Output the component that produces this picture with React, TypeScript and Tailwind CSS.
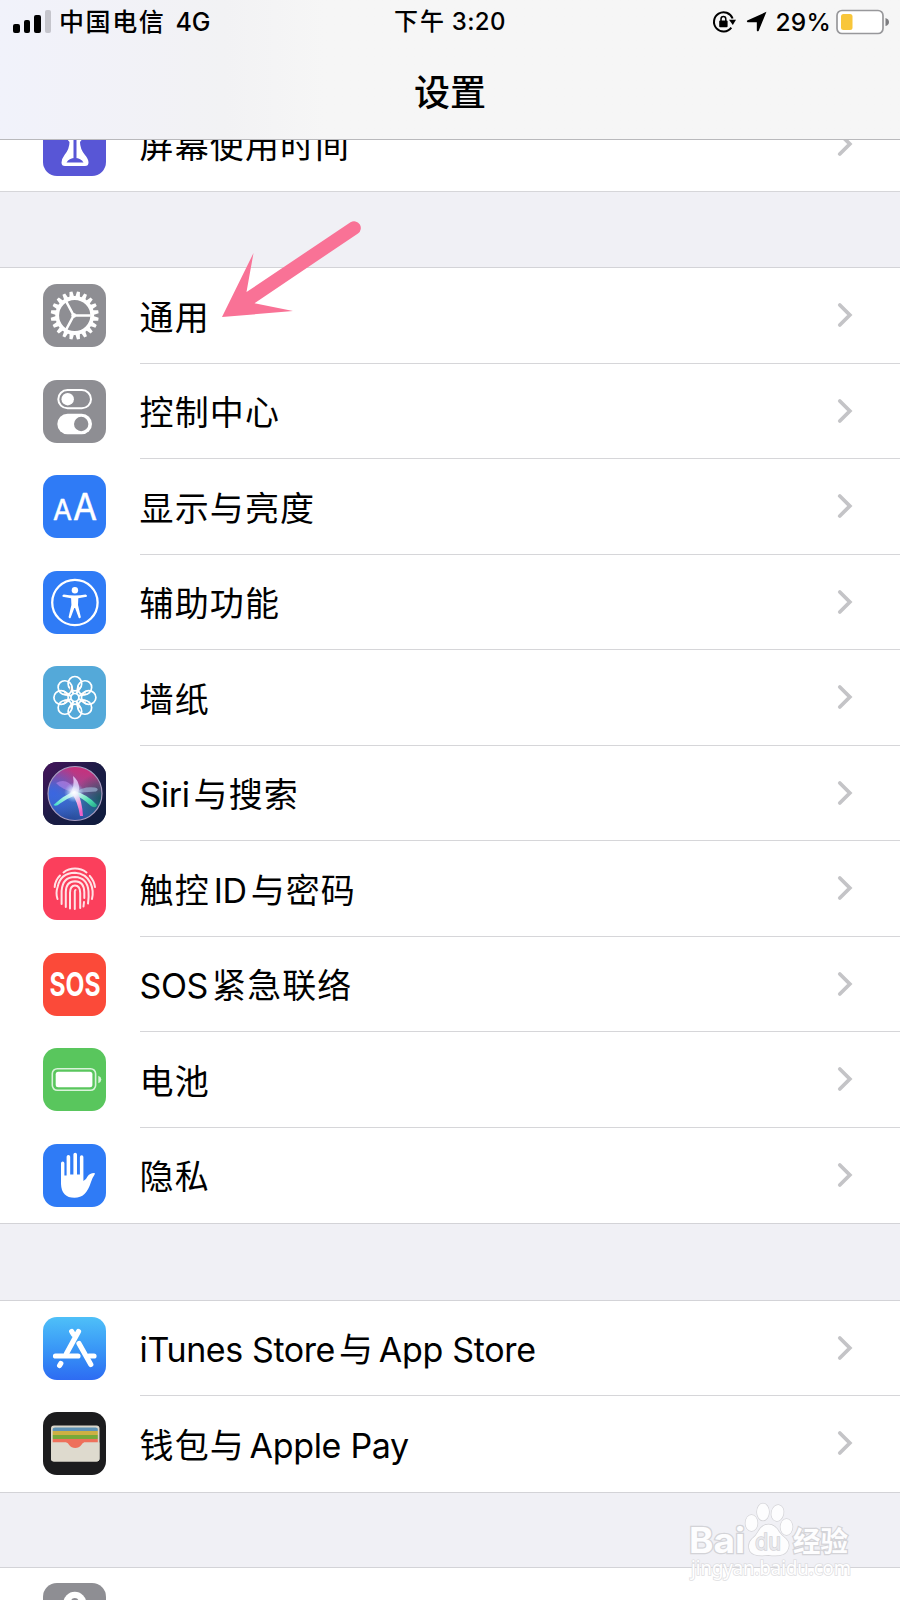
import type { ReactNode } from "react";

const FONT = "font-['Inter','Noto_Sans_CJK_SC',sans-serif]";

function Icon({ bg, children }: { bg: string; children?: ReactNode }) {
  return (
    <svg viewBox="0 0 63 63" className={`block size-[63px] shrink-0 rounded-[14px] ${bg}`} fill="none">
      {children}
    </svg>
  );
}

function ScreenTimeIcon() {
  return (
    <Icon bg="bg-[#5856d6]">
      <path
        d="M20 10 H43 V14 Q43 22 37 29 Q37 36 42 42 Q45.500 46 45.500 49.500 Q45.500 53 42 53 H22 Q18.500 53 18.500 49.500 Q18.500 46 21.500 42 Q26.500 36 26.500 29 Q20 22 20 14 Z"
        fill="#fff"
      />
      <path d="M32 24 V46" stroke="#5856d6" strokeWidth="3" />
      <path d="M23.500 49.500 Q26 45 32 45 Q38 45 40.500 49.500 Z" fill="#5856d6" />
    </Icon>
  );
}

function GearIcon() {
  const teeth = Array.from({ length: 20 }, (_, i) => (i * 360) / 20);
  return (
    <Icon bg="bg-[#8e8e93]">
      <g transform="translate(31.7 31.5)">
        {teeth.map((a) => (
          <path key={a} d="M-2.300 -18.500 L-1.500 -24 H1.500 L2.300 -18.500 Z" fill="#fff" transform={`rotate(${a + 9})`} />
        ))}
        <circle r="17.500" stroke="#fff" strokeWidth="3.800" />
        <path d="M-1 0 H16 M-1 0 L-8.500 -14 M-1 0 L-8.500 14" stroke="#fff" strokeWidth="2.600" />
        <circle cx="-1" r="2.400" fill="#fff" />
      </g>
    </Icon>
  );
}

function ControlIcon() {
  return (
    <Icon bg="bg-[#8e8e93]">
      <rect x="15.300" y="10" width="32.700" height="18.300" rx="9.150" stroke="#fff" strokeWidth="2" />
      <circle cx="24.700" cy="19.200" r="6.200" fill="#fff" />
      <rect x="14.300" y="33.700" width="34.700" height="20.600" rx="10.300" fill="#fff" />
      <circle cx="38.200" cy="44" r="7.200" fill="#8e8e93" />
    </Icon>
  );
}

function DisplayIcon() {
  return (
    <Icon bg="bg-[#2f7bf6]">
      <g fill="#fff" stroke="#fff" strokeWidth="0.500" strokeLinejoin="round" className="font-['Inter',sans-serif] font-normal">
        <text x="10" y="44.800" fontSize="29" textLength="19" lengthAdjust="spacingAndGlyphs">A</text>
        <text x="30" y="44.800" fontSize="37" textLength="24" lengthAdjust="spacingAndGlyphs">A</text>
      </g>
    </Icon>
  );
}

function AccessibilityIcon() {
  return (
    <Icon bg="bg-[#2f7bf6]">
      <circle cx="31.900" cy="31.500" r="22.700" stroke="#fff" strokeWidth="2.300" />
      <circle cx="31.900" cy="19.200" r="3.200" fill="#fff" />
      <path
        d="M20.800 23.600 Q31.700 25.400 42.600 23.600 Q44.600 23.900 43.800 25.700 L35.300 27.200 L35 34 L37.800 46 Q37.400 47.800 35.800 47 L32.100 37 H31.300 L27.600 47 Q26 47.800 25.600 46 L28.400 34 L28.100 27.200 L19.600 25.700 Q18.800 23.900 20.800 23.600 Z"
        fill="#fff"
      />
    </Icon>
  );
}

function WallpaperIcon() {
  return (
    <Icon bg="bg-[#54a9d9]">
      <g transform="translate(31.9 31.5)" stroke="#fff" strokeWidth="1.700">
        {[0, 45, 90, 135, 180, 225, 270, 315].map((a) => (
          <g key={a} transform={`rotate(${a})`}>
            <path d="M0 -6 L-2.300 -8.800 L0 -12 L2.300 -8.800 Z" fill="#a9a8a5" stroke="none" transform="rotate(22.5)" />
            <ellipse cy="-13.800" rx="6.800" ry="7.200" />
            <path d="M-5.800 -10.500 L-1.600 -4 M5.800 -10.500 L1.600 -4" />
          </g>
        ))}
        <circle r="4" />
      </g>
    </Icon>
  );
}

function SiriIcon() {
  return (
    <Icon bg="bg-[#17183f]">
      <defs>
        <linearGradient id="siri-bg" x1="0" y1="0" x2="1" y2="1">
          <stop offset="0" stopColor="#46145c" />
          <stop offset="0.500" stopColor="#1b1c45" />
          <stop offset="1" stopColor="#0e1c3d" />
        </linearGradient>
        <linearGradient id="siri-orb" x1="0.600" y1="0" x2="0.400" y2="1">
          <stop offset="0" stopColor="#c92f7b" />
          <stop offset="0.350" stopColor="#a5458f" />
          <stop offset="0.600" stopColor="#3f74c4" />
          <stop offset="1" stopColor="#27489a" />
        </linearGradient>
        <radialGradient id="siri-left" cx="0.100" cy="0.500" r="0.550">
          <stop offset="0" stopColor="#3b66e0" />
          <stop offset="1" stopColor="#3b66e0" stopOpacity="0" />
        </radialGradient>
        <radialGradient id="siri-right" cx="1" cy="0.600" r="0.500">
          <stop offset="0" stopColor="#16555f" />
          <stop offset="1" stopColor="#16555f" stopOpacity="0" />
        </radialGradient>
        <radialGradient id="siri-glow">
          <stop offset="0" stopColor="#fff" />
          <stop offset="0.400" stopColor="#e6f4ff" stopOpacity="0.700" />
          <stop offset="1" stopColor="#9fd8ff" stopOpacity="0" />
        </radialGradient>
        <linearGradient id="siri-ray-l" x1="1" y1="0" x2="0" y2="1">
          <stop offset="0" stopColor="#fff" />
          <stop offset="1" stopColor="#3fdfc8" />
        </linearGradient>
        <linearGradient id="siri-ray-r" x1="0" y1="0" x2="1" y2="1">
          <stop offset="0" stopColor="#fff" />
          <stop offset="0.600" stopColor="#4fe0b4" />
          <stop offset="1" stopColor="#22a987" />
        </linearGradient>
        <linearGradient id="siri-ray-b" x1="0" y1="0" x2="0.300" y2="1">
          <stop offset="0" stopColor="#fff" />
          <stop offset="1" stopColor="#ee62c8" />
        </linearGradient>
      </defs>
      <rect width="63" height="63" fill="url(#siri-bg)" />
      <circle cx="32" cy="31.500" r="27" fill="url(#siri-orb)" />
      <circle cx="32" cy="31.500" r="27" fill="url(#siri-left)" />
      <circle cx="32" cy="31.500" r="27" fill="url(#siri-right)" />
      <path d="M32 31 Q18 27 13 21 Q20 17 26 21 Q31 25 32 31Z" fill="#c08cf0" opacity="0.550" />
      <path d="M31 31 Q40 24 52 25.500 Q57 27 53 29.500 Q42 30 31 31Z" fill="#9fb9d8" opacity="0.650" />
      <path d="M27 31 Q32 25 30 14 Q35 18 36 24 Q37 28 34 32Z" fill="#e3c4f3" opacity="0.900" />
      <path d="M32 29 Q21 33 10.500 43 Q13 45 17 41.500 Q25 36 33 33Z" fill="url(#siri-ray-l)" />
      <path d="M31 29 Q44 32 54 43 Q53 47 48 44 Q40 36 31 33Z" fill="url(#siri-ray-r)" />
      <path d="M28.500 31 Q35 40 37 54 L40 54 Q39 38 34 30Z" fill="url(#siri-ray-b)" />
      <circle cx="31" cy="30.500" r="10" fill="url(#siri-glow)" />
      <circle cx="32" cy="31.500" r="27" stroke="#a79cc0" strokeWidth="1.200" />
    </Icon>
  );
}

function TouchIdIcon() {
  return (
    <Icon bg="bg-[#fb3f5c]">
      <g stroke="#ffe3e6" strokeWidth="2" strokeLinecap="round">
        <path d="M20.500 15.500 Q25.500 11.500 32 11.500 Q38.500 11.500 43.500 15.500" />
        <path d="M11.700 30 Q12 23.500 17 18.500 M46.800 18.800 Q51.300 24 52 30" />
        <path d="M14.500 42 Q12.500 36 14.600 30 Q17.500 16 32 15.800 Q43 16.500 47.500 26 Q51 34 49 42" />
        <path d="M18.600 47 V34 Q19.500 20 32 20 Q44 20.500 45.500 34 Q46 40 45 46.500" />
        <path d="M22.800 50 V35 Q23 24.500 32 24.300 Q41 24.500 41.300 35 V41 M41 45 L40.500 49.500" />
        <path d="M27 51.500 V36 Q27 28.500 32 28.500 Q37.200 28.500 37.200 36 V51" />
        <path d="M31.800 52 V34.500 Q31.800 33 32.500 33" />
      </g>
    </Icon>
  );
}

function SosIcon() {
  return (
    <Icon bg="bg-[#fb4a39]">
      <text
        x="6.500"
        y="43.300"
        fontSize="32"
        textLength="51"
        lengthAdjust="spacingAndGlyphs"
        fill="#fff"
        className="font-['Inter',sans-serif] font-bold"
      >
        SOS
      </text>
    </Icon>
  );
}

function BatteryIcon() {
  return (
    <Icon bg="bg-[#59c65d]">
      <rect x="9.300" y="20.700" width="43.300" height="21.600" rx="5" stroke="#d9f3da" strokeWidth="1.600" />
      <rect x="12.700" y="23.700" width="36.700" height="15.600" rx="2.500" fill="#fff" />
      <path d="M55.300 27.800 Q58.300 29 58.300 31.500 Q58.300 34 55.300 35.200 Z" fill="#d9f3da" />
    </Icon>
  );
}

function PrivacyIcon() {
  return (
    <Icon bg="bg-[#2f7bf6]">
      <path
        d="M18 19.300 a1.700 1.700 0 0 1 3.400 0 V31.500 H23.600 V12.800 a1.800 1.800 0 0 1 3.600 0 V30.500 H30.400 V10.600 a1.800 1.800 0 0 1 3.600 0 V30.500 H36.900 V13 a1.750 1.750 0 0 1 3.500 0 V37 Q43 36 44.500 32.500 Q46.500 29 51.300 29 Q52.500 29.300 51.500 30.800 Q49.500 33.500 48 38 Q45.500 46 41.500 50 Q37.500 53.800 31.500 53.800 Q18.500 53.800 18 40 Z"
        fill="#fff"
      />
    </Icon>
  );
}

function AppStoreIcon() {
  return (
    <Icon bg="bg-linear-to-b from-[#4fc0f8] to-[#2e6bf2]">
      <g stroke="#fff" strokeWidth="5.200" strokeLinecap="round">
        <path d="M28.700 14.500 L30.500 17.500 M35.500 14.500 L23.500 36.500" />
        <path d="M36 26.500 L47.800 47.500" />
        <path d="M12.500 39 H35 M46 39 H51" />
        <path d="M17.800 46.500 L16.600 48.500" />
      </g>
    </Icon>
  );
}

function WalletIcon() {
  return (
    <Icon bg="bg-[#1c1c1e]">
      <rect x="8" y="13.500" width="48.500" height="36" rx="3" fill="#dad6ca" />
      <path d="M9.700 19 V17 Q9.700 15.500 12 15.500 H52.500 Q54.800 15.500 54.800 17 V19 Z" fill="#5f93b6" />
      <rect x="9.700" y="19" width="45.100" height="4" fill="#cdb043" />
      <rect x="9.700" y="23" width="45.100" height="4" fill="#77a93a" />
      <path d="M9.700 27 H54.800 V30.500 H9.700 Z M23 30 H41 V36 H23 Z" fill="#ee705b" />
      <path d="M8 30.500 H23.500 Q25 31 26 32.800 Q28.500 36 32.200 36 Q36 36 38.500 32.800 Q39.500 31 41 30.500 H56.500 V46.500 Q56.500 49.500 53.500 49.500 H11 Q8 49.500 8 46.500 Z" fill="#dedace" />
    </Icon>
  );
}

function PasswordsIcon() {
  return (
    <Icon bg="bg-[#8e8e93]">
      <circle cx="31.800" cy="20.300" r="11.500" fill="#fff" />
      <circle cx="31.800" cy="18.800" r="3.800" fill="#8e8e93" />
    </Icon>
  );
}

function Chevron() {
  return (
    <svg viewBox="0 0 18 28" className="mr-[46px] h-7 w-[18px] shrink-0" fill="none">
      <path d="M3.800 4 L13.800 14 L3.800 24" stroke="#c4c4c7" strokeWidth="3.800" strokeLinecap="round" />
    </svg>
  );
}

function Label({ text }: { text: string }) {
  const parts = text.split(/([ A-Za-z]+)/).filter(Boolean);
  return (
    <span className="pt-[5px] text-[34px] leading-none whitespace-pre text-black">
      {parts.map((p, i) => {
        if (!/[A-Za-z]/.test(p)) {
          return <span key={i} className="tracking-[1.1px]">{p}</span>;
        }
        const spaced = p.startsWith(" ");
        return (
          <span key={i} className={`mr-[4px] ${spaced ? "tracking-[-0.3px]" : "tracking-[-0.4px]"} ${i > 0 && !spaced ? "ml-[4px]" : ""}`}>
            {spaced && <span className="tracking-[-5px]"> </span>}
            {p.trimStart()}
          </span>
        );
      })}
    </span>
  );
}

function Row({ icon, text, last = false }: { icon: ReactNode; text: string; last?: boolean }) {
  return (
    <div className="flex h-[95.5px] shrink-0 items-center bg-white pl-[43.3px]">
      {icon}
      <div
        className={`ml-[33.3px] flex h-full flex-1 items-center justify-between border-b ${last ? "border-transparent" : "border-[#d6d6d9]"}`}
      >
        <Label text={text} />
        <Chevron />
      </div>
    </div>
  );
}

function StatusBar() {
  return (
    <div className="grid h-[43px] grid-cols-3 items-center text-[24px] leading-none font-medium text-black">
      <div className="flex items-center pl-[13px]">
        <div className="flex h-[23px] items-end gap-[4px]">
          <div className="h-[9px] w-[6.500px] rounded-[2px] bg-black" />
          <div className="h-[13px] w-[6.500px] rounded-[2px] bg-black" />
          <div className="h-[18px] w-[6.500px] rounded-[2px] bg-black" />
          <div className="h-[23px] w-[6.500px] rounded-[2px] bg-[#c5c5cc]" />
        </div>
        <span className="ml-[8px] pt-[1px] text-[25px] tracking-[1.6px] whitespace-nowrap">中国电信</span>
        <span className="ml-[10px] pt-[1px] text-[25px]">4G</span>
      </div>
      <div className="flex items-center justify-center pt-[1px]">
        <span className="tracking-[1.8px]">下午</span>
        <span className="ml-[6px] tracking-[0.4px]">3:20</span>
      </div>
      <div className="flex items-center justify-end pr-[10px]">
        <svg viewBox="0 0 24 24" className="h-6 w-6" fill="none">
          <path d="M19.300 17.600 A9.600 9.600 0 1 1 20.600 8.500" stroke="#000" strokeWidth="2" />
          <path d="M17 9.800 H24 L20.800 15 Z" fill="#000" />
          <rect x="7.200" y="10.500" width="8.400" height="6.800" rx="1" fill="#000" />
          <path d="M9 11 V9 a2.400 2.400 0 0 1 4.800 0 V11" stroke="#000" strokeWidth="1.500" />
        </svg>
        <svg viewBox="0 0 20 20" className="ml-[10px] size-[21px]">
          <path d="M19.500 0.800 L12 19 Q10.800 20 10.300 18.500 V10.600 H1.500 Q0.300 9.800 1.200 9 Z" fill="#000" />
        </svg>
        <span className="ml-[9px] pt-[1px] text-[24.5px] tracking-[0.2px]">29%</span>
        <svg viewBox="0 0 54 26" className="ml-[5px] h-[26px] w-[54px]" fill="none">
          <rect x="1" y="1.500" width="46" height="23" rx="5" fill="#fff" stroke="#98989b" strokeWidth="1.700" />
          <rect x="5" y="5" width="11.500" height="16" rx="2.500" fill="#f8c63a" />
          <path d="M49.500 9 Q53 10 53 13 Q53 16 49.500 17 Z" fill="#7d7d80" />
        </svg>
      </div>
    </div>
  );
}

function Arrow() {
  return (
    <svg viewBox="0 0 150 100" className="absolute top-[220px] left-[220px] h-[100px] w-[150px]">
      <path
        d="M2 97 L33.500 33 L26.500 72 L130.500 2.300 A6.700 6.700 0 0 1 138 13.400 L34.500 83.300 L73 91 Z"
        fill="#f97296"
      />
    </svg>
  );
}

function Watermark() {
  return (
    <svg viewBox="0 0 180 84" className="absolute top-[1500px] left-[680px] h-[84px] w-[180px]">
      <g fill="#fdfdfe" stroke="#d3d3d7" strokeWidth="1.400" paintOrder="stroke">
        <text x="9" y="53" fontSize="35" textLength="56" lengthAdjust="spacingAndGlyphs" strokeWidth="2.400" className="font-['Inter',sans-serif] font-bold">
          Bai
        </text>
        <ellipse cx="71.500" cy="23" rx="6" ry="8" />
        <ellipse cx="83" cy="12" rx="6" ry="8.500" />
        <ellipse cx="97.500" cy="13" rx="6" ry="8" transform="rotate(12 97.500 13)" />
        <ellipse cx="106.500" cy="27" rx="6" ry="8" />
        <path d="M88.500 24.500 Q95 24.500 99 32 Q101 35 106 39 Q111 44 107 51 Q103 57 88.500 55 Q74 57 70 51 Q67 44 72 39 Q76 36 78 32 Q82 24.500 88.500 24.500Z" />
        <text x="75" y="50" fontSize="23" textLength="26" lengthAdjust="spacingAndGlyphs" fill="#e8e8ec" className="font-['Inter',sans-serif]">
          du
        </text>
        <text x="113" y="51.500" fontSize="28" textLength="55" lengthAdjust="spacingAndGlyphs" strokeWidth="2.400" className="font-['Noto_Sans_CJK_SC',sans-serif] font-bold">
          经验
        </text>
        <text x="11" y="75" fontSize="19" textLength="160" lengthAdjust="spacingAndGlyphs" fill="#fff" strokeWidth="1.600" stroke="#dedee1" className="font-['Noto_Sans',sans-serif]">
          jingyan.baidu.com
        </text>
      </g>
    </svg>
  );
}

const MAIN: { text: string; icon: ReactNode }[] = [
  { text: "通用", icon: <GearIcon /> },
  { text: "控制中心", icon: <ControlIcon /> },
  { text: "显示与亮度", icon: <DisplayIcon /> },
  { text: "辅助功能", icon: <AccessibilityIcon /> },
  { text: "墙纸", icon: <WallpaperIcon /> },
  { text: "Siri与搜索", icon: <SiriIcon /> },
  { text: "触控ID与密码", icon: <TouchIdIcon /> },
  { text: "SOS紧急联络", icon: <SosIcon /> },
  { text: "电池", icon: <BatteryIcon /> },
  { text: "隐私", icon: <PrivacyIcon /> },
];

export default function App() {
  return (
    <div className={`relative flex h-[1600px] w-[900px] flex-col overflow-hidden bg-[#f0f0f5] ${FONT}`} lang="zh-CN">
      <header className="h-[140px] shrink-0 border-b border-[#b9b9bc] bg-[#f6f6f6] bg-linear-to-r from-[#f1f2fb] via-[#f2f2f4] via-25% to-[#f6f6f6] to-36%">
        <StatusBar />
        <h1 className="flex h-[99px] items-center justify-center text-[36px] leading-none font-medium text-black">设置</h1>
      </header>
      <section className="flex h-[52px] shrink-0 flex-col justify-end overflow-hidden border-b border-[#d6d6d9] bg-white">
        <div className="-mb-[1px] shrink-0">
          <Row icon={<ScreenTimeIcon />} text="屏幕使用时间" last />
        </div>
      </section>
      <section className="mt-[75px] shrink-0 border-t border-b border-[#d3d3d7] bg-white">
        {MAIN.map((r, i) => (
          <Row key={r.text} icon={r.icon} text={r.text} last={i === MAIN.length - 1} />
        ))}
      </section>
      <section className="mt-[75.5px] shrink-0 border-t border-b border-[#d3d3d7] bg-white">
        <Row icon={<AppStoreIcon />} text="iTunes Store与 App Store" />
        <Row icon={<WalletIcon />} text="钱包与 Apple Pay" last />
      </section>
      <section className="mt-[74.5px] h-[60px] shrink-0 overflow-hidden border-t border-[#d3d3d7] bg-white pt-[15px] pl-[43.3px]">
        <PasswordsIcon />
      </section>
      <Arrow />
      <Watermark />
    </div>
  );
}
